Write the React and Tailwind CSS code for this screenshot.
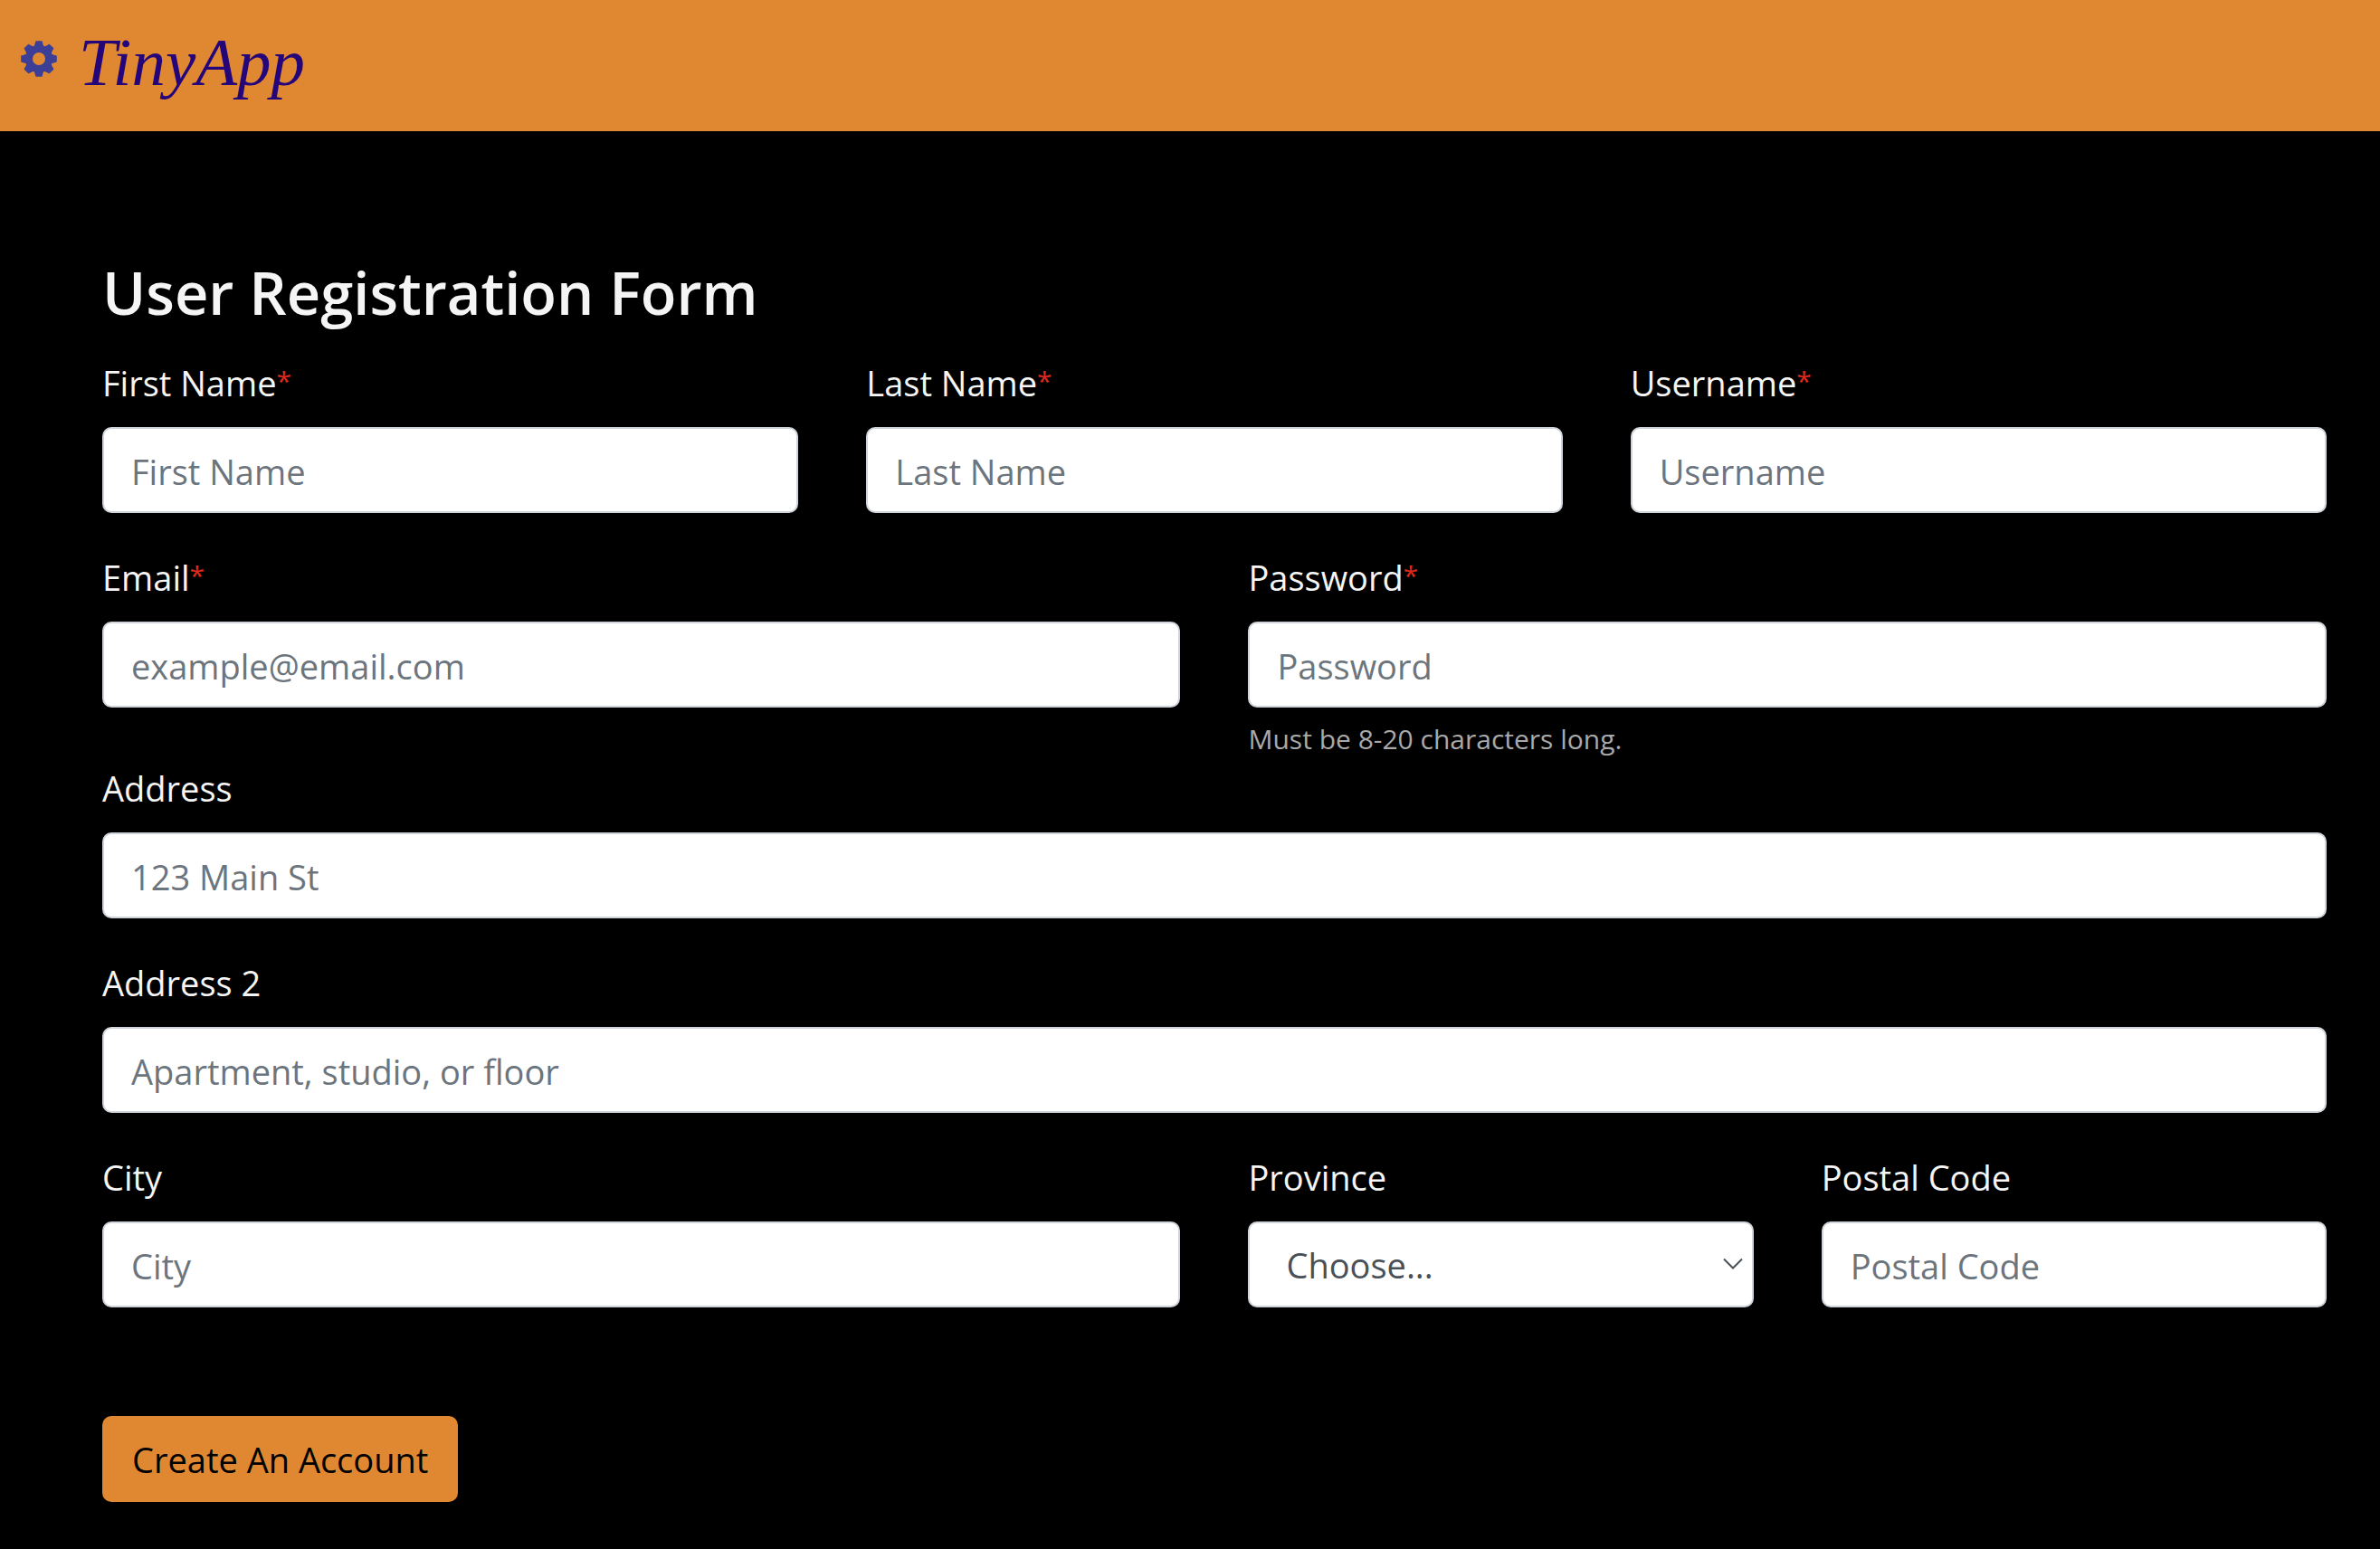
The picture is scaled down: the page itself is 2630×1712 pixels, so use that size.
function Gear() {
  const teeth = [0, 45, 90, 135, 180, 225, 270, 315];
  return (
    <svg viewBox="-20 -20 40 40" className="h-10 w-10 shrink-0" aria-hidden="true">
      <g fill="#3d3f96">
        {teeth.map((angle) => (
          <path
            key={angle}
            transform={`rotate(${angle})`}
            d="M-6.6 -12 C-5 -14.6 -4.2 -16.4 -3.8 -19 Q-3.7 -19.8 -3 -19.8 H3 Q3.7 -19.8 3.8 -19 C4.2 -16.4 5 -14.6 6.6 -12 Z"
          />
        ))}
        <path
          fillRule="evenodd"
          d="M0 -14.8 A14.8 14.8 0 1 1 0 14.8 A14.8 14.8 0 1 1 0 -14.8 Z M0 -7 A7 7 0 1 0 0 7 A7 7 0 1 0 0 -7 Z"
        />
      </g>
    </svg>
  );
}

const controlClass =
  "block h-[95px] w-full rounded-[10px] border-2 border-[#ced4da] bg-white px-[30px] pt-0.5 placeholder:text-[#6c757d] placeholder:opacity-100";

function Label({ id, children, required }) {
  return (
    <label htmlFor={id} className="mb-[18px] block h-[62px] leading-[62px]">
      {children}
      {required && <span className="align-text-top text-[30px] leading-[48px] text-[#e0291c]">*</span>}
    </label>
  );
}

function Field({ id, label, placeholder, type = "text", required, hint, className }) {
  return (
    <div className={className}>
      <Label id={id} required={required}>
        {label}
      </Label>
      <input
        id={id}
        type={type}
        placeholder={placeholder}
        aria-describedby={hint ? `${id}-hint` : undefined}
        className={controlClass}
      />
      {hint && (
        <p id={`${id}-hint`} className="mt-3 text-[30px] leading-[46px] text-[#a9a9a9]">
          {hint}
        </p>
      )}
    </div>
  );
}

export default function App() {
  return (
    <div className="min-h-screen bg-black font-['Segoe_UI','Open_Sans',sans-serif] text-[38px] text-[#f5f5f5]">
      <header className="bg-[#e08831] px-[23px] pt-[25px] pb-10">
        <a href="#" className="flex w-fit items-center gap-6">
          <Gear />
          <span className="pt-2 font-['Liberation_Serif',serif] text-[75px] leading-[72px] text-[#24057a] italic">
            TinyApp
          </span>
        </a>
      </header>

      <main className="pt-[136px] pr-[59px] pb-[52px] pl-[113px]">
        <h1 className="mb-[27px] text-[65px] leading-[84px] font-semibold">User Registration Form</h1>
        <form className="grid grid-cols-12 gap-x-[75px]">
          <Field id="first-name" label="First Name" placeholder="First Name" required className="col-span-4 mb-10" />
          <Field id="last-name" label="Last Name" placeholder="Last Name" required className="col-span-4 mb-10" />
          <Field id="username" label="Username" placeholder="Username" required className="col-span-4 mb-10" />
          <Field id="email" type="email" label="Email" placeholder="example@email.com" required className="col-span-6" />
          <Field
            id="password"
            type="password"
            label="Password"
            placeholder="Password"
            required
            hint="Must be 8-20 characters long."
            className="col-span-6"
          />
          <Field id="address" label="Address" placeholder="123 Main St" className="col-span-12 mb-10" />
          <Field id="address-2" label="Address 2" placeholder="Apartment, studio, or floor" className="col-span-12 mb-10" />
          <Field id="city" label="City" placeholder="City" className="col-span-6" />
          <div className="col-span-3">
            <Label id="province">Province</Label>
            <div className="relative">
              <select
                id="province"
                className="block h-[95px] w-full appearance-none rounded-[10px] border-2 border-[#ced4da] bg-white px-10 pt-0.5 text-[#495057]"
              >
                <option>Choose...</option>
              </select>
              <svg
                viewBox="0 0 22 14"
                className="pointer-events-none absolute top-10 right-3 h-3.5 w-[22px]"
                fill="none"
                stroke="#495057"
                strokeWidth="2"
                aria-hidden="true"
              >
                <path d="M1 1.5 11 11.5 21 1.5" />
              </svg>
            </div>
          </div>
          <Field id="postal-code" label="Postal Code" placeholder="Postal Code" className="col-span-3" />
          <div className="col-span-12 mt-[120px]">
            <button type="submit" className="h-[95px] rounded-[10px] bg-[#e08831] px-[33px] pt-0.5 text-black">
              Create An Account
            </button>
          </div>
        </form>
      </main>
    </div>
  );
}
